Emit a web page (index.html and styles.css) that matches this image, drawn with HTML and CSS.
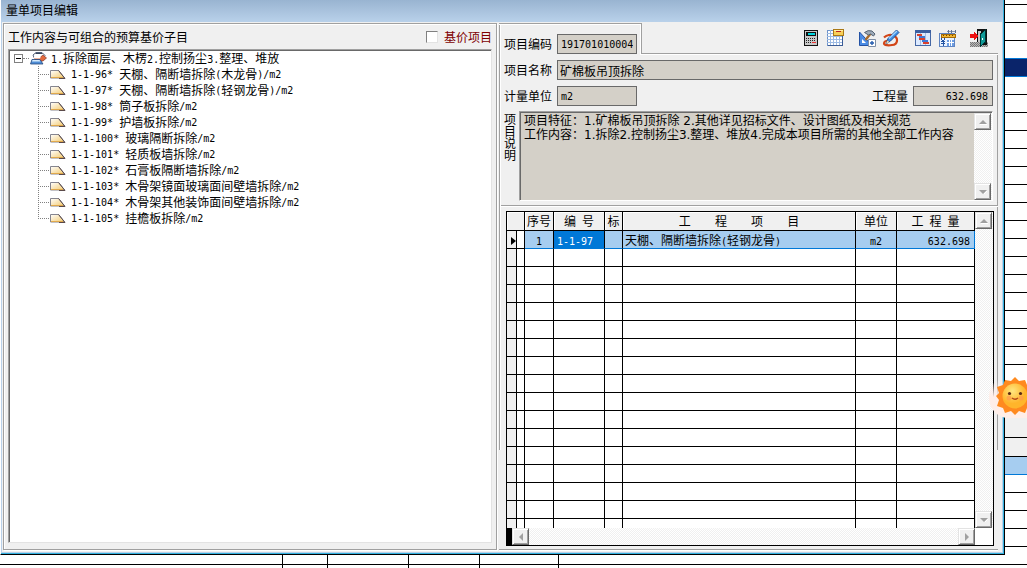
FILE: index.html
```html
<!DOCTYPE html>
<html lang="zh-CN">
<head>
<meta charset="utf-8">
<title>量单项目编辑</title>
<link rel="stylesheet" href="styles.css">
</head>
<body>
<svg class="defs" aria-hidden="true">
  <defs>
    <linearGradient id="leaf-fill" x1="0" y1="0" x2="1" y2="1"><stop offset="0" stop-color="#fff"/><stop offset="1" stop-color="#f3c96b"/></linearGradient>
    <symbol id="leaf" viewBox="0 0 16 9"><path d="M.5 8V.5h8.2L14.5 8z" fill="url(#leaf-fill)" stroke="#85858f"/><path d="M8.5.5 15 8.5H9" fill="none" stroke="#5a4a4a"/><path d="M1 7.5h12" stroke="#e0a94c"/></symbol>
    <symbol id="up" viewBox="0 0 8 8"><path d="M0 6 4 2l4 4z" fill="#a0a0a0"/><path d="M1 6.5h7" stroke="#fff"/></symbol>
    <symbol id="down" viewBox="0 0 8 8"><path d="M0 2h8L4 6z" fill="#a0a0a0"/><path d="m5 6 3-3" stroke="#fff"/></symbol>
    <symbol id="left" viewBox="0 0 8 8"><path d="M6 0v8L2 4z" fill="#a0a0a0"/></symbol>
    <symbol id="right" viewBox="0 0 8 8"><path d="M2 0v8l4-4z" fill="#a0a0a0"/></symbol>
  </defs>
</svg>

<main class="window">
  <header class="titlebar">量单项目编辑</header>
  <div class="client">
    <section class="panel tree-panel">
      <div class="tree-head">
        <span>工作内容与可组合的预算基价子目</span>
        <label class="base-price"><input type="checkbox">基价项目</label>
      </div>
      <div class="tree">
        <div class="root">
          <button class="toggle" aria-label="折叠"></button><span class="stub"></span>
          <svg class="folder" viewBox="0 0 17 13"><path d="M6 .5h6l3 3-2 2H4L3 3z" fill="#fff" stroke="#54627a"/><path d="M6 1h6l1 1H5z" fill="#39465c"/><path d="M4 5.500h6l3-2.500 3.500 3-3.500 3H6z" fill="#e36a3d" stroke="#82372a" stroke-width=".7"/><path d="M4 4.500h7l-1 2H4z" fill="#fff"/><path d="M2 7.500h8l3 4.500H.5z" fill="#4e8dd6" stroke="#274a7d" stroke-width=".8"/><path d="M2.500 8h7l1 1.500H2z" fill="#d6ebfc"/></svg>
          <span><i class="n">1.</i>拆除面层、木楞<i class="n">2.</i>控制扬尘<i class="n">3.</i>整理、堆放</span>
        </div>
        <ul>
          <li><svg class="leaf"><use href="#leaf"/></svg><i class="n">1-1-96* </i>天棚、隔断墙拆除<i class="n">(</i>木龙骨<i class="n">)/m2</i></li>
          <li><svg class="leaf"><use href="#leaf"/></svg><i class="n">1-1-97* </i>天棚、隔断墙拆除<i class="n">(</i>轻钢龙骨<i class="n">)/m2</i></li>
          <li><svg class="leaf"><use href="#leaf"/></svg><i class="n">1-1-98* </i>筒子板拆除<i class="n">/m2</i></li>
          <li><svg class="leaf"><use href="#leaf"/></svg><i class="n">1-1-99* </i>护墙板拆除<i class="n">/m2</i></li>
          <li><svg class="leaf"><use href="#leaf"/></svg><i class="n">1-1-100* </i>玻璃隔断拆除<i class="n">/m2</i></li>
          <li><svg class="leaf"><use href="#leaf"/></svg><i class="n">1-1-101* </i>轻质板墙拆除<i class="n">/m2</i></li>
          <li><svg class="leaf"><use href="#leaf"/></svg><i class="n">1-1-102* </i>石膏板隔断墙拆除<i class="n">/m2</i></li>
          <li><svg class="leaf"><use href="#leaf"/></svg><i class="n">1-1-103* </i>木骨架镜面玻璃面间壁墙拆除<i class="n">/m2</i></li>
          <li><svg class="leaf"><use href="#leaf"/></svg><i class="n">1-1-104* </i>木骨架其他装饰面间壁墙拆除<i class="n">/m2</i></li>
          <li><svg class="leaf"><use href="#leaf"/></svg><i class="n">1-1-105* </i>挂檐板拆除<i class="n">/m2</i></li>
        </ul>
      </div>
    </section>

    <section class="detail">
      <div class="top">
        <div class="tab"><label for="code">项目编码</label><input class="num" id="code" value="191701010004" readonly></div>
        <div class="toolbar">
          <button aria-label="计算器"><svg viewBox="0 0 18 18" shape-rendering="crispEdges"><path d="M2 1h14v16H2z" fill="#111"/><path d="M3 2h12v14H3z" fill="#c8c8c8"/><path d="M4 3h10v4H4z" fill="#111"/><path d="M6 4h7v2H6z" fill="#00d4dc"/><path d="M4 9.500h10M4 11.500h10M4 13.500h6" stroke="#222" stroke-dasharray="1 1"/><path d="M10 13h4v1h-4z" fill="#e33"/></svg></button>
          <button aria-label="表格"><svg viewBox="0 0 18 18" shape-rendering="crispEdges"><path d="M1.500 1.500h15v15h-15z" fill="#fff" stroke="#6f93c9"/><path d="M1 4.500h15M1 7.500h15M1 10.500h15M1 13.500h15M4.500 1v15M7.500 1v15M10.500 1v15M13.500 1v15" stroke="#9dbbe4"/><path d="M2 16.500h14.500V6" fill="none" stroke="#3b5c96"/><path d="M7.500.500h10v6h-10z" fill="#f7cf58" stroke="#a97815"/><path d="M8 1h9v1H8z" fill="#fff1a8"/><path d="M10 2h5v1h-5z" fill="#b22"/></svg></button>
          <button class="gap" aria-label="工具"><svg viewBox="0 0 18 18"><path d="M1.500 3v13.500H14z" fill="#4a8be4" stroke="#2452a4"/><path d="M4 10v4h4z" fill="#fff"/><path d="M13 4 7.500 11" stroke="#a86b2a" stroke-width="2.400"/><path d="M6.500 3.500Q10 .500 14 2l3 3-1.500 2-3-2-2 1z" fill="#9daab8" stroke="#536273"/><path d="M10.500 10.500h7v7h-7z" fill="#fff" stroke="#7c8da5"/><path d="M14 12v4M12 14h4" stroke="#255cae" stroke-width="1.400"/></svg></button>
          <button aria-label="编辑"><svg viewBox="0 0 18 18"><path d="M2 8.500c3-3 7-3 9-2 6 2 5 9-1 9.500-3 .5-8 .5-8-1.500s3-3 6-3" fill="none" stroke="#d24517" stroke-width="2.200"/><path d="m4 15 2-5.500L14.500 1 17 3.500 8.500 12z" fill="#3d8de5" stroke="#17488f" stroke-width=".9"/><path d="m7 9.500 8-7.500" stroke="#a5d7ff" stroke-width="1.200"/><path d="m4 15 1.200-3.500L7.500 13z" fill="#f0d7a8"/></svg></button>
          <button class="gap" aria-label="进度"><svg viewBox="0 0 18 18" shape-rendering="crispEdges"><path d="M1.500 1.500h15v15h-15z" fill="#dceaff" stroke="#4668a5"/><path d="M1 1h16v3H1z" fill="#3c5fa0"/><path d="M6.500 4v12M11.500 4v12" stroke="#a7bfe5"/><path d="M3 5h5v2H3zM5 9h6v2H5zM9 13h6v2H9z" fill="#db402c"/><path d="M5 7h6v2H5zM8 11h6v2H8z" fill="#3f77d4"/></svg></button>
          <button aria-label="费用"><svg viewBox="0 0 18 18" shape-rendering="crispEdges"><path d="M1.500 4.500h15v13h-15z" fill="#e9f2ff" stroke="#6085c2"/><path d="M9 2.500h9" stroke="#8a97ae"/><path d="M10.500 1v3M13.500 1v3M17.500 1v3" stroke="#60708d"/><path d="M3.500 5.500h14v3h-14z" fill="#f4b72f" stroke="#a36b0b"/><path d="M5 6h1v1H5zM8 6h1v1H8zM11 6h1v1h-1zM14 6h1v1h-1z" fill="#704500"/><path d="m3 9.500 2 2.500 2-2.500M5 12v5M3 12.500h4M3 14.500h4" fill="none" stroke="#2454a2"/><path d="M9 11h7v6H9z" fill="#6d9de2"/><path d="M9 13.500h7M11.500 11v6M13.500 11v6" stroke="#fff"/></svg></button>
          <button class="gap" aria-label="退出"><svg viewBox="0 0 18 18" shape-rendering="crispEdges"><path d="M0 13h18v5H0z" fill="#b8b8b8"/><path d="M0 13.500h18M0 15.500h18M0 17.500h18" stroke="#777" stroke-dasharray="1 1"/><path d="M1 14.500h17M1 16.500h17" stroke="#777" stroke-dasharray="1 1"/><path d="M7 0h10v16h-7V2H8v11H7z" fill="#111"/><path d="M8 2h3v11H8z" fill="#c8c8c8"/><path d="M15.500 1v12l-5 4V5z" fill="#109b98" stroke="#033"/><path d="M12 9h1v2h-1z" fill="#fff"/><path d="M0 5h4V2l4 5-4 4V9H0z" fill="#ee1010"/></svg></button>
        </div>
      </div>

      <div class="body">
        <div class="field"><label for="name">项目名称</label><input id="name" class="wide" value="矿棉板吊顶拆除" readonly></div>
        <div class="field"><label for="unit">计量单位</label><input id="unit" class="num" value="m2" readonly>
          <label for="qty" class="push">工程量</label><input id="qty" class="num right" value="632.698" readonly></div>
        <div class="note"><label for="desc">项目说明</label>
          <div class="note-box"><textarea id="desc" readonly>项目特征：1.矿棉板吊顶拆除 2.其他详见招标文件、设计图纸及相关规范
工作内容：1.拆除2.控制扬尘3.整理、堆放4.完成本项目所需的其他全部工作内容</textarea>
            <div class="vscroll"><button aria-label="上"><svg><use href="#up"/></svg></button><button aria-label="下"><svg><use href="#down"/></svg></button></div>
          </div>
        </div>
      </div>

      <div class="grid-area">
        <div class="grid">
          <div class="grid-rows">
            <table>
              <colgroup><col class="c-mark"><col class="c-gap"><col class="c-seq"><col class="c-code"><col class="c-flag"><col><col class="c-unit"><col class="c-qty"></colgroup>
              <thead><tr><th colspan="2"></th><th>序号</th><th>编<i class="n"> </i>号</th><th>标</th><th>工<i class="n">    </i>程<i class="n">    </i>项<i class="n">    </i>目</th><th>单位</th><th>工<i class="n"> </i>程<i class="n"> </i>量</th></tr></thead>
              <tbody>
                <tr class="current"><td><svg class="marker" viewBox="0 0 5 8"><path d="M0 0v8l5-4z"/></svg></td><td></td><td><i class="n">1</i></td><td class="focus"><i class="n">1-1-97</i></td><td></td><td class="name">天棚、隔断墙拆除<i class="n">(</i>轻钢龙骨<i class="n">)</i></td><td><i class="n">m2</i></td><td class="amount"><i class="n">632.698</i></td></tr>
                <tr><td><td><td><td><td><td><td><td></tr>
                <tr><td><td><td><td><td><td><td><td></tr>
                <tr><td><td><td><td><td><td><td><td></tr>
                <tr><td><td><td><td><td><td><td><td></tr>
                <tr><td><td><td><td><td><td><td><td></tr>
                <tr><td><td><td><td><td><td><td><td></tr>
                <tr><td><td><td><td><td><td><td><td></tr>
                <tr><td><td><td><td><td><td><td><td></tr>
                <tr><td><td><td><td><td><td><td><td></tr>
                <tr><td><td><td><td><td><td><td><td></tr>
                <tr><td><td><td><td><td><td><td><td></tr>
                <tr><td><td><td><td><td><td><td><td></tr>
                <tr><td><td><td><td><td><td><td><td></tr>
                <tr><td><td><td><td><td><td><td><td></tr>
                <tr><td><td><td><td><td><td><td><td></tr>
                <tr><td><td><td><td><td><td><td><td></tr>
              </tbody>
            </table>
          </div>
          <div class="vscroll"><button aria-label="上"><svg><use href="#up"/></svg></button><button aria-label="下"><svg><use href="#down"/></svg></button></div>
          <div class="hscroll"><button aria-label="左"><svg><use href="#left"/></svg></button><button aria-label="右"><svg><use href="#right"/></svg></button></div>
        </div>
      </div>
    </section>
  </div>
</main>

<div class="side">
  <div class="first"></div><div></div><div></div><div class="above"></div><div class="navy"></div>
  <div></div><div></div><div></div><div></div><div></div><div></div><div></div><div></div><div></div>
  <div></div><div></div><div></div><div></div><div></div><div></div><div></div>
  <div class="blank"></div>
  <div class="gray tall"></div><div class="gray"></div><div class="blue"></div>
  <div></div><div></div><div></div><div></div><div></div><div></div>
</div>

<div class="under"><div class="u1"></div><div class="u2"></div><div class="u3"></div><div class="u4"></div><div class="u5"></div></div>

<div class="sun">
  <svg viewBox="0 0 38 40">
    <defs><radialGradient id="face" cx=".4" cy=".3"><stop offset="0" stop-color="#ffe680"/><stop offset="1" stop-color="#ffb52b"/></radialGradient></defs>
    <path d="M26 1 30 5 36 4 38 9 44 11 42 17 45 20 42 24 44 30 38 32 36 37 30 35 26 39 22 35 16 37 14 32 8 30 10 24 7 20 10 17 8 11 14 9 16 4 22 5z" fill="#ff8a1f"/>
    <circle cx="26" cy="20" r="12.500" fill="url(#face)"/>
    <circle cx="20" cy="22" r="2.500" fill="#ff9a4d" opacity=".7"/><circle cx="32" cy="22" r="2.500" fill="#ff9a4d" opacity=".7"/>
    <circle cx="20.500" cy="17.500" r="1.600" fill="#5b2a13"/><circle cx="31.500" cy="17.500" r="1.600" fill="#5b2a13"/>
    <path d="M23 22q3 2.500 6 0" fill="none" stroke="#b54a18" stroke-width="1.500"/>
  </svg>
</div>
</body>
</html>
```
FILE: styles.css
```css
* { box-sizing: border-box; }
body {
  margin: 0;
  height: 100vh;
  overflow: hidden;
  position: relative;
  display: grid;
  grid-template: minmax(0, 1fr) 13px / minmax(0, 1fr) 22px;
  background: #fff;
  color: #000;
  font: 12px/16px "Noto Sans CJK SC", sans-serif;
}
.defs { position: absolute; width: 0; height: 0; }
button, input, textarea { font: inherit; color: inherit; margin: 0; padding: 0; border-radius: 0; }
button { border: 0; background: none; }
.n { font: 10px "DejaVu Sans Mono", monospace; white-space: pre; }

.window {
  display: flex;
  flex-direction: column;
  min-height: 0;
  background: #f0f0f0;
  border-right: 1px solid #000;
  border-bottom: 1px solid #000;
  border-left: 1px solid #fff;
  box-shadow: inset -1px -1px #31b0de, inset -2px -2px #b9d1ea, inset 1px 0 #b9d1ea;
}
.titlebar {
  height: 22px;
  padding: 2px 5px;
  background: linear-gradient(#99b4d1, #b9d1ea);
  margin-right: 1px;
}
.client {
  flex: 1;
  min-height: 0;
  display: grid;
  grid-template-columns: minmax(0, 495fr) minmax(0, 503fr);
  gap: 1px;
  padding: 1px 2px 3px;
}
.panel {
  display: flex;
  flex-direction: column;
  min-height: 0;
  border: 1px solid #a0a0a0;
  box-shadow: inset 1px 1px #fff, 1px 1px #fff;
  margin: 0 1px 1px 0;
  padding: 0 4px 6px;
}
.tree-head { display: flex; justify-content: space-between; align-items: center; height: 25px; }
.base-price { display: flex; align-items: center; gap: 6px; color: #800000; }
.base-price input {
  appearance: none;
  width: 12px; height: 12px;
  background: #fff;
  border: 1px solid #808080;
  border-right-color: #e3e3e3;
  border-bottom-color: #e3e3e3;
}
.tree {
  flex: 1;
  min-height: 0;
  background: #fff;
  border: 1px solid #a0a0a0;
  border-right-color: #e3e3e3;
  border-bottom-color: #e3e3e3;
  box-shadow: inset 1px 1px #696969;
  padding-left: 5px;
  white-space: nowrap;
}
.root { display: flex; align-items: center; height: 16px; }
.toggle { width: 9px; height: 9px; border: 1px solid #808080; background: linear-gradient(#000, #000) center / 5px 1px no-repeat; }
.stub { width: 6px; border-top: 1px dotted #808080; }
.folder { width: 17px; height: 13px; margin: 0 4px 0 1px; }
.tree ul { list-style: none; margin: 0; padding: 0 0 0 24px; }
.tree li { display: flex; align-items: center; height: 16px; }
.tree li::before {
  content: "";
  width: 12px; height: 16px;
  background:
    repeating-linear-gradient(#808080 0 1px, #fff 1px 2px) 0 0 / 1px 100% no-repeat,
    repeating-linear-gradient(90deg, #808080 0 1px, #fff 1px 2px) 0 8px / 100% 1px no-repeat;
}
.tree li:last-child::before {
  background-size: 1px 50%, 100% 1px;
}
.leaf { width: 16px; height: 9px; margin-right: 5px; }

.detail {
  display: flex;
  flex-direction: column;
  min-width: 0;
  min-height: 0;
  margin-right: 4px;
  padding-bottom: 1px;
  background:
    linear-gradient(#a0a0a0, #a0a0a0) 0 0 / 1px 427px no-repeat,
    linear-gradient(#fff, #fff) 1px 0 / 1px 427px no-repeat,
    linear-gradient(#a0a0a0, #a0a0a0) 100% 32px / 1px 395px no-repeat,
    linear-gradient(#a0a0a0, #a0a0a0) 0 calc(100% - 1px) / 100% 1px no-repeat,
    linear-gradient(#fff, #fff) 0 100% / 100% 1px no-repeat;
}
.top { display: flex; height: 32px; }
.tab {
  display: flex;
  align-items: center;
  gap: 5px;
  width: 142px;
  padding: 9px 0 0 5px;
  border-top: 1px solid #a0a0a0;
  box-shadow: inset 0 1px #fff, inset -1px 0 #fff;
}
input[readonly] {
  width: 80px;
  height: 20px;
  padding: 0 2px;
  border: 1px solid #696969;
  background: #d4d0c8;
  line-height: 18px;
}
input.num { font: 10px "DejaVu Sans Mono", monospace; padding: 0 3px; }
input.right { text-align: right; padding-right: 4px; }
input.wide { flex: 1; }
.toolbar {
  flex: 1;
  display: flex;
  justify-content: flex-end;
  align-items: flex-start;
  gap: 6px;
  padding: 6px 10px 0 0;
  border-left: 1px solid #a0a0a0;
  border-bottom: 1px solid #a0a0a0;
  margin-bottom: 1px;
  box-shadow: 0 1px #fff;
}
.toolbar button { width: 18px; height: 18px; }
.toolbar .gap { margin-left: 8px; }
.toolbar svg { display: block; width: 18px; height: 18px; }

.body { padding: 5px 5px 4px; display: flex; flex-direction: column; gap: 6px; }
.field { display: flex; align-items: center; gap: 5px; }
.push { margin-left: auto; }
.note { display: flex; gap: 3px; height: 90px; margin-top: -1px; }
.note label { width: 12px; line-height: 12px; padding-top: 2px; }
.note-box {
  flex: 1;
  display: flex;
  background: #d4d0c8;
  border: 1px solid #a0a0a0;
  border-right-color: #fff;
  border-bottom-color: #fff;
  box-shadow: inset 1px 1px #696969;
}
textarea {
  flex: 1;
  min-width: 0;
  resize: none;
  border: 0;
  outline: 0;
  overflow: hidden;
  background: none;
  padding: 2px 4px;
  font: 12px/14px "DejaVu Sans", "Noto Sans CJK SC", sans-serif;
}
.vscroll, .hscroll {
  display: flex;
  justify-content: space-between;
  background: repeating-conic-gradient(#f0f0f0 0 25%, #fff 0 50%) 0 0 / 2px 2px;
}
.vscroll { flex-direction: column; width: 18px; }
.note-box .vscroll { margin-top: 1px; }
.vscroll button, .hscroll button {
  display: grid;
  place-items: center;
  width: 17px;
  height: 17px;
  background: #f0f0f0;
  border: 1px solid #e3e3e3;
  border-right-color: #696969;
  border-bottom-color: #696969;
  box-shadow: inset 1px 1px #fff, inset -1px -1px #a0a0a0;
}
.vscroll svg, .hscroll svg { width: 8px; height: 8px; }

.grid-area {
  flex: 1;
  min-height: 0;
  display: flex;
  margin-left: 2px;
  padding: 5px 4px 4px 5px;
  border-top: 1px solid #a0a0a0;
  box-shadow: inset 0 1px #fff;
}
.grid {
  flex: 1;
  min-width: 0;
  display: grid;
  grid-template: minmax(0, 1fr) 17px / minmax(0, 1fr) 18px;
  border: 1px solid #000;
  background: #fff;
}
.grid-rows { overflow: hidden; }
.hscroll { border-left: 5px solid #000; }
table { width: 100%; table-layout: fixed; border-collapse: separate; border-spacing: 0; }
.c-mark { width: 10px; }
.c-gap { width: 8px; }
.c-seq { width: 29px; }
.c-code { width: 51px; }
.c-flag { width: 18px; }
.c-unit { width: 41px; }
.c-qty { width: 78px; }
th, td {
  padding: 0;
  height: 18px;
  line-height: 16px;
  border-right: 1px solid #000;
  border-bottom: 1px solid #000;
  text-align: center;
  font-weight: normal;
  white-space: nowrap;
  overflow: hidden;
}
th { height: 19px; background: #f0f0f0; box-shadow: inset 1px 1px #fff; }
td:first-child { background: #f0f0f0; }
.current td:nth-child(n+3) { background: #a6cdf0; border-bottom-color: #0078d7; }
.current td.focus { background: #0078d7; color: #fff; text-align: left; padding-left: 3px; }
.current td.name { text-align: left; padding-left: 2px; }
.current td.amount { text-align: right; padding-right: 4px; border-right-color: #0078d7; }
.marker { width: 5px; height: 8px; margin-left: 3px; vertical-align: middle; }

.side { grid-column: 2; grid-row: 1 / 3; overflow: hidden; }
.side div { height: 18px; border-bottom: 1px solid #000; }
.side .first { height: 5px; }
.side .above { border-color: #0078d7; }
.side .navy { background: #0a246a; border-color: #0078d7; }
.side .blank { height: 36px; border-color: #f0f0f0; }
.side .gray { height: 19px; background: #f0f0f0; }
.side .tall { height: 37px; }
.side .blue { background: #a6cdf0; border-color: #0078d7; }

.under { grid-column: 1; grid-row: 2; display: flex; background: linear-gradient(#000, #000) 0 9px / 100% 1px no-repeat; }
.under div { border-right: 1px solid #000; }
.u1 { width: 283px; }
.u2 { width: 45px; }
.u3 { width: 81px; }
.u4 { width: 71px; }
.u5 { width: 79px; }

.sun {
  position: absolute;
  right: 0;
  top: 376px;
  width: 38px;
  height: 42px;
  border-radius: 20px 0 0 20px;
  background: linear-gradient(#fff0 10%, #ffeee8 50%);
}
.sun svg { display: block; width: 38px; height: 40px; overflow: hidden; }
```
